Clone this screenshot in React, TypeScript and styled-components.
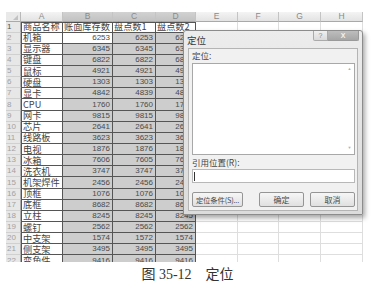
import React from 'react'
import styled, { createGlobalStyle, css } from 'styled-components'

const GlobalStyle = createGlobalStyle`
  html, body {
    margin: 0;
    background: #fff;
  }
  body {
    font-family: "Liberation Sans", "Noto Sans CJK SC", sans-serif;
    color: #333;
  }
`

const cjk = `"Noto Sans CJK SC", "Liberation Sans", sans-serif`

const columns = ['A', 'B', 'C', 'D', 'E', 'F', 'G', 'H']

const rows: [string, number, number, number][] = [
  ['机箱', 6253, 6253, 6253],
  ['显示器', 6345, 6345, 6345],
  ['键盘', 6822, 6822, 6822],
  ['鼠标', 4921, 4921, 4921],
  ['硬盘', 1303, 1303, 1303],
  ['显卡', 4842, 4839, 4842],
  ['CPU', 1760, 1760, 1760],
  ['网卡', 9815, 9815, 9815],
  ['芯片', 2641, 2641, 2641],
  ['线路板', 3623, 3623, 3623],
  ['电视', 1876, 1876, 1876],
  ['冰箱', 7606, 7605, 7606],
  ['洗衣机', 3747, 3747, 3747],
  ['机架焊件', 2456, 2456, 2456],
  ['顶框', 1076, 1076, 1076],
  ['底框', 8682, 8682, 8682],
  ['立柱', 8245, 8245, 8245],
  ['螺钉', 2562, 2562, 2562],
  ['中支架', 1574, 1572, 1574],
  ['侧支架', 3495, 3495, 3495],
  ['变角件', 9416, 9416, 9416],
]

const Page = styled.div`
  position: relative;
  width: 375px;
  height: 298px;
  overflow: hidden;
`

const SheetArea = styled.div`
  padding: 12px 0 0 6px;
`

// 22 rows of ~11.15px; the last one is cut by the bottom edge of the shot
const Sheet = styled.div`
  display: grid;
  grid-template-columns: 15px 42px 50px 43px 40px 42px 41px 42px 42px;
  grid-template-rows: 9.5px repeat(22, 11.15px);
  width: 357px;
  height: 250px;
  overflow: hidden;
`

const Corner = styled.div`
  box-sizing: border-box;
  position: relative;
  background: #e9e9e9;
  border-right: 1px solid #b9b9b9;
  border-bottom: 1px solid #a9a9a9;

  &::after {
    content: '';
    position: absolute;
    right: 2px;
    bottom: 1px;
    border-left: 5px solid transparent;
    border-bottom: 5px solid #c2c2c2;
  }
`

const ColHead = styled.div<{ $selected?: boolean }>`
  box-sizing: border-box;
  display: flex;
  align-items: center;
  justify-content: center;
  font-size: 8.5px;
  line-height: 1;
  color: #8a8a8a;
  border-right: 1px solid #c4c4c4;
  border-bottom: 1px solid #a9a9a9;
  background: ${(p) =>
    p.$selected ? 'linear-gradient(#d2d2d2, #c2c2c2)' : 'linear-gradient(#f4f4f4, #e3e3e3)'};
`

const RowHead = styled.div<{ $first?: boolean }>`
  box-sizing: border-box;
  display: flex;
  align-items: center;
  padding-left: 1px;
  font-size: 8px;
  line-height: 1;
  color: ${(p) => (p.$first ? '#555' : '#a2a2a2')};
  background: #e7e7e7;
  border-right: 1px solid #a9a9a9;
  border-bottom: 1px solid #d0d0d0;
`

const DataCell = styled.div<{
  $num?: boolean
  $selected?: boolean
  $left?: boolean
  $top?: boolean
}>`
  box-sizing: border-box;
  display: flex;
  align-items: center;
  white-space: nowrap;
  line-height: 1;
  border-right: 1px solid #555;
  border-bottom: 1px solid #555;
  background: ${(p) => (p.$selected ? '#cdcdcd' : '#fff')};
  ${(p) => p.$left && 'border-left: 1px solid #555;'}
  ${(p) => p.$top && 'border-top: 1px solid #555;'}
  ${(p) =>
    p.$num
      ? css`
          justify-content: flex-end;
          padding-right: 2px;
          font-family: "Liberation Sans", sans-serif;
          font-size: 8px;
          color: #4a4a4a;
        `
      : css`
          padding-left: 1px;
          font-family: ${cjk};
          font-size: 9.2px;
          color: #444;
        `}
`

const BlankCell = styled.div`
  box-sizing: border-box;
  border-right: 1px solid #dedede;
  border-bottom: 1px solid #dedede;
`

const Dialog = styled.div`
  position: absolute;
  left: 183px;
  top: 30px;
  width: 180px;
  height: 185px;
  box-sizing: border-box;
  display: flex;
  flex-direction: column;
  padding: 0 4px 3px;
  border: 1px solid #8c8c8c;
  border-radius: 3px 3px 1px 1px;
  background: linear-gradient(#ececec, #dcdcdc);
  box-shadow: 2px 3px 5px rgba(0, 0, 0, 0.35);
`

const TitleBar = styled.div`
  height: 17px;
  display: flex;
  align-items: center;
  justify-content: space-between;
`

const Title = styled.span`
  margin-left: -1px;
  margin-top: 1px;
  font-family: ${cjk};
  font-size: 9.5px;
  color: #3a3a3a;
`

const Controls = styled.div`
  align-self: flex-start;
  display: flex;
  margin-right: -1px;
`

const HelpButton = styled.div`
  box-sizing: border-box;
  width: 15px;
  height: 10px;
  display: flex;
  align-items: center;
  justify-content: center;
  font-size: 7px;
  color: #888;
  border: 1px solid #aaa;
  border-top: none;
  border-radius: 0 0 0 2px;
  background: linear-gradient(#f0f0f0, #dadada);
`

const CloseButton = styled.div`
  box-sizing: border-box;
  width: 31px;
  height: 10px;
  display: flex;
  align-items: center;
  justify-content: center;
  font-size: 7px;
  font-weight: bold;
  color: #f2f2f2;
  border: 1px solid #9a9a9a;
  border-top: none;
  border-left: none;
  border-radius: 0 0 2px 0;
  background: linear-gradient(#bdbdbd, #a6a6a6);
`

const Client = styled.div`
  flex: 1;
  display: flex;
  flex-direction: column;
  padding: 1px 2px 3px 3px;
  border: 1px solid #b4b4b4;
  background: #f1f1f1;
`

const FieldLabel = styled.div<{ $gap?: number }>`
  height: 10px;
  margin-top: ${(p) => p.$gap ?? 0}px;
  display: flex;
  align-items: center;
  font-family: ${cjk};
  font-size: 8.5px;
  color: #444;
`

const ListBox = styled.div`
  box-sizing: border-box;
  height: 92px;
  margin-top: 3px;
  display: flex;
  justify-content: flex-end;
  border: 1px solid #a8a8a8;
  background: #fff;
`

const ScrollTrack = styled.div`
  width: 9px;
  display: flex;
  flex-direction: column;
  justify-content: space-between;
  align-items: center;
  padding: 3px 0 4px;
  font-size: 4px;
  line-height: 1;
  color: #b0b0b0;
`

const RefInput = styled.div`
  box-sizing: border-box;
  height: 14px;
  margin-top: 2px;
  display: flex;
  align-items: center;
  padding-left: 1px;
  border: 1px solid #b8b8b8;
  background: #fff;
`

const Caret = styled.span`
  width: 1px;
  height: 9px;
  background: #333;
`

const ButtonRow = styled.div`
  height: 15px;
  margin-top: 9px;
  display: flex;
  gap: 6px;
`

const Button = styled.div<{ $wide?: boolean }>`
  box-sizing: border-box;
  width: ${(p) => (p.$wide ? 51 : 45)}px;
  ${(p) => p.$wide && 'margin-right: auto;'}
  display: flex;
  align-items: center;
  justify-content: center;
  white-space: nowrap;
  font-family: ${cjk};
  font-size: ${(p) => (p.$wide ? 7.4 : 8)}px;
  letter-spacing: ${(p) => (p.$wide ? -0.2 : 0)}px;
  color: #4a4a4a;
  border: 1px solid #959595;
  border-radius: 2px;
  background: linear-gradient(#f6f6f6, #e0e0e0);
`

const Caption = styled.div`
  margin-top: 5px;
  text-align: center;
  font-family: "Liberation Serif", "Noto Sans CJK SC", serif;
  font-size: 14px;
  line-height: 16px;
  color: #333;
`

export default function App() {
  return (
    <Page>
      <GlobalStyle />
      <SheetArea>
        <Sheet>
          <Corner />
          {columns.map((c, i) => (
            <ColHead key={c} $selected={i >= 1 && i <= 3}>
              {c}
            </ColHead>
          ))}
          <RowHead $first>1</RowHead>
          <DataCell $left $top>商品名称</DataCell>
          <DataCell $top>账面库存数</DataCell>
          <DataCell $top>盘点数1</DataCell>
          <DataCell $top>盘点数2</DataCell>
          {columns.slice(4).map((c) => (
            <BlankCell key={c} />
          ))}
          {rows.map((r, i) => (
            <React.Fragment key={i}>
              <RowHead>{i + 2}</RowHead>
              <DataCell $left>{r[0]}</DataCell>
              <DataCell $num $selected={i > 0}>{r[1]}</DataCell>
              <DataCell $num $selected>{r[2]}</DataCell>
              <DataCell $num $selected>{r[3]}</DataCell>
              {columns.slice(4).map((c) => (
                <BlankCell key={c} />
              ))}
            </React.Fragment>
          ))}
        </Sheet>
      </SheetArea>

      <Dialog>
        <TitleBar>
          <Title>定位</Title>
          <Controls>
            <HelpButton>?</HelpButton>
            <CloseButton>X</CloseButton>
          </Controls>
        </TitleBar>
        <Client>
          <FieldLabel>定位:</FieldLabel>
          <ListBox>
            <ScrollTrack>
              <span>▲</span>
              <span>▼</span>
            </ScrollTrack>
          </ListBox>
          <FieldLabel $gap={2}>引用位置(R):</FieldLabel>
          <RefInput>
            <Caret />
          </RefInput>
          <ButtonRow>
            <Button $wide>定位条件(S)...</Button>
            <Button>确定</Button>
            <Button>取消</Button>
          </ButtonRow>
        </Client>
      </Dialog>

      <Caption>图 35-12　定位</Caption>
    </Page>
  )
}
